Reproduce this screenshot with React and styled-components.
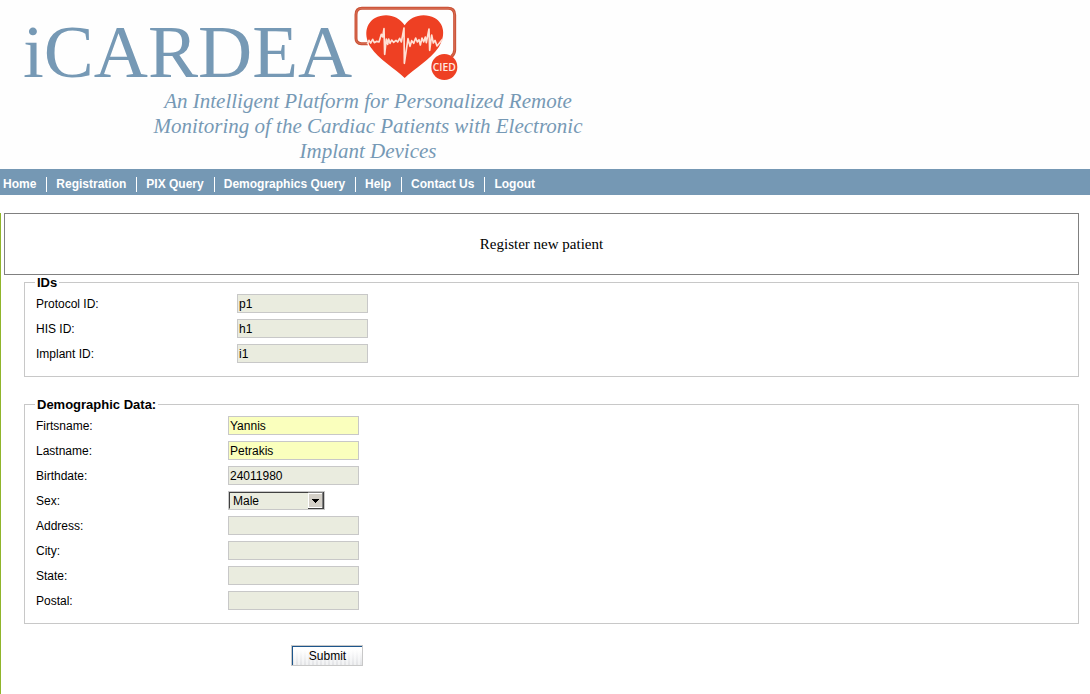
import React from "react";
import styled, { createGlobalStyle } from "styled-components";

const GlobalStyle = createGlobalStyle`
  * { box-sizing: border-box; }
  body {
    margin: 0;
    background: #fff;
    color: #000;
    font-family: "Liberation Sans", Arial, sans-serif;
    font-size: 12px;
  }
`;

const Page = styled.div`
  display: flex;
  flex-direction: column;
  min-height: 100vh;
`;

const Header = styled.header`
  padding: 4px 0 5px 23px;
  color: #7699b5;
  background: #fefefe;
`;

const Brand = styled.div`
  display: flex;
  align-items: flex-start;
`;

const Wordmark = styled.h1`
  margin: 0;
  padding-top: 6px;
  font: 75px/84px "Liberation Serif", "Times New Roman", serif;
`;

const HeartLogo = styled.svg`
  flex: none;
  width: 108px;
  height: 80px;
`;

const Tagline = styled.p`
  width: 450px;
  margin: -5px 0 0 120px;
  text-align: center;
  font: italic 21px/25px "Liberation Serif", "Times New Roman", serif;
`;

const Nav = styled.nav`
  display: flex;
  align-items: center;
  height: 26px;
  padding: 5px 0 0 3px;
  background: #7598b4;
`;

const NavLink = styled.a`
  color: #fff;
  font-weight: bold;
  line-height: 15px;
  text-decoration: none;

  & + & {
    margin-left: 10px;
    padding-left: 9px;
    border-left: 1px solid #fff;
  }
`;

const Main = styled.main`
  flex: 1;
  margin-top: 18px;
  padding: 0 11px 28px 3px;
  border-left: 1px solid #90b52b;
`;

const Title = styled.h2`
  margin: 0;
  padding: 20px 0;
  border: 1px solid #808080;
  text-align: center;
  font: 15px/20px "Liberation Serif", "Times New Roman", serif;
`;

const Form = styled.form`
  padding-left: 20px;
`;

const Group = styled.fieldset`
  min-width: 0;
  margin: 0;
  padding: 1px 10px 10px;
  border: 1px solid #c8c8c8;

  & + & { margin-top: 20px; }
`;

const Legend = styled.legend`
  padding: 1px 2px 0;
  font-size: 13px;
  font-weight: bold;
  line-height: 14px;
`;

const Row = styled.div`
  display: grid;
  grid-template-columns: ${(p) => p.$labelWidth}px 1fr;
  align-items: center;
  height: 25px;
  padding-left: 1px;
`;

const TextInput = styled.input`
  width: 131px;
  height: 19px;
  padding: 0 1px;
  border: 1px solid #c8c8c8;
  border-radius: 0;
  outline: none;
  background: ${(p) => (p.$filled ? "#faffbd" : "#eaecdf")};
  color: #000;
  font: inherit;
`;

const SelectBox = styled.div`
  position: relative;
  width: 97px;
  height: 19px;
  border: 1px solid #c8c8c8;
`;

const Select = styled.select`
  display: block;
  width: 100%;
  height: 100%;
  padding: 0 18px 0 3px;
  appearance: none;
  border: 1px solid #eaecdf;
  border-top-color: #404040;
  border-left-color: #404040;
  border-radius: 0;
  outline: none;
  background: #eaecdf;
  color: #000;
  font: inherit;
`;

const Arrow = styled.svg`
  position: absolute;
  top: 0;
  right: 0;
  width: 16px;
  height: 17px;
  pointer-events: none;
`;

const Submit = styled.button`
  display: block;
  width: 72px;
  height: 21px;
  margin: 21px 0 0 267px;
  padding: 0 0 0 1px;
  border: 1px solid #c8c8c8;
  border-radius: 0;
  background: repeating-linear-gradient(90deg, transparent 0 2px, #ffffff80 2px 4px),
    linear-gradient(#fff 20%, #e2e3e6);
  box-shadow: inset 1px 1px #1d568c;
  color: #000;
  font: inherit;
`;

const links = ["Home", "Registration", "PIX Query", "Demographics Query", "Help", "Contact Us", "Logout"];

const ids = [
  { id: "protocol", label: "Protocol ID:", value: "p1" },
  { id: "his", label: "HIS ID:", value: "h1" },
  { id: "implant", label: "Implant ID:", value: "i1" },
];

const demographics = [
  { id: "firstname", label: "Firtsname:", value: "Yannis", filled: true },
  { id: "lastname", label: "Lastname:", value: "Petrakis", filled: true },
  { id: "birthdate", label: "Birthdate:", value: "24011980" },
  { id: "sex", label: "Sex:", options: ["Male", "Female"] },
  { id: "address", label: "Address:", value: "" },
  { id: "city", label: "City:", value: "" },
  { id: "state", label: "State:", value: "" },
  { id: "postal", label: "Postal:", value: "" },
];

function Heart() {
  return (
    <HeartLogo viewBox="20 12 324 240" aria-hidden="true">
      <path
        d="M68 131H48Q32 131 32 115V44Q32 25 50 25H308Q328 25 328 45V150Q328 162 318 170"
        fill="none" stroke="#cb5236" strokeWidth="9"
      />
      <path
        d="M68 131H48Q32 131 32 115V44Q32 25 50 25H308Q328 25 328 45V150Q328 162 318 170"
        fill="none" stroke="#dd7a60" strokeWidth="2"
      />
      <path
        d="M178 234C150 207 101 179 76 142C54 107 61 70 89 54C121 37 158 46 178 76C197 46 237 37 268 54C297 70 302 107 280 142C255 179 207 207 178 234Z"
        fill="#ee4023"
      />
      <path
        d="M66 133L71 121L76 129L82 118L87 128L94 124L101 126L108 103L112 111L116 86L118 163L123 117L127 133L130 117L134 130L139 120L145 127L152 121L157 126L163 115L168 126L176 84L177 190L188 116L194 139L199 122L205 130L211 114L216 126L221 119L225 135L230 114L235 126L240 111L243 128L251 87L253 151L259 105L264 129L269 121L275 138L283 128L292 117"
        fill="none" stroke="#ffe1d5" strokeWidth="5" strokeLinejoin="round"
      />
      <circle cx="297" cy="201" r="39" fill="#ee4023" />
      <text
        x="297" y="213" textAnchor="middle" fill="#ffe9e0"
        fontFamily="Open Sans, sans-serif" fontSize="31" fontWeight="600"
      >
        CIED
      </text>
    </HeartLogo>
  );
}

function Field({ field, labelWidth }) {
  return (
    <Row $labelWidth={labelWidth}>
      <label htmlFor={field.id}>{field.label}</label>
      {field.options ? (
        <SelectBox>
          <Select id={field.id} name={field.id}>
            {field.options.map((o) => <option key={o}>{o}</option>)}
          </Select>
          <Arrow viewBox="0 0 16 17" shapeRendering="crispEdges" aria-hidden="true">
            <rect width="16" height="17" fill="#404040" />
            <rect width="15" height="16" fill="#808080" />
            <rect width="14" height="15" y="1" fill="#fff" />
            <rect x="1" y="2" width="13" height="13" fill="#d4d0c8" />
            <path d="M4 7H11V8H10V9H9V10H8V11H7V10H6V9H5V8H4Z" fill="#000" />
          </Arrow>
        </SelectBox>
      ) : (
        <TextInput id={field.id} name={field.id} type="text" defaultValue={field.value} $filled={field.filled} />
      )}
    </Row>
  );
}

export default function App() {
  return (
    <Page>
      <GlobalStyle />
      <Header>
        <Brand>
          <Wordmark>iCARDEA</Wordmark>
          <Heart />
        </Brand>
        <Tagline>
          An Intelligent Platform for Personalized Remote Monitoring of the Cardiac Patients with Electronic Implant
          Devices
        </Tagline>
      </Header>
      <Nav>
        {links.map((l) => <NavLink key={l} href="#">{l}</NavLink>)}
      </Nav>
      <Main>
        <Title>Register new patient</Title>
        <Form onSubmit={(e) => e.preventDefault()}>
          <Group>
            <Legend>IDs</Legend>
            {ids.map((f) => <Field key={f.id} field={f} labelWidth={201} />)}
          </Group>
          <Group>
            <Legend>Demographic Data:</Legend>
            {demographics.map((f) => <Field key={f.id} field={f} labelWidth={192} />)}
          </Group>
          <Submit type="submit">Submit</Submit>
        </Form>
      </Main>
    </Page>
  );
}
